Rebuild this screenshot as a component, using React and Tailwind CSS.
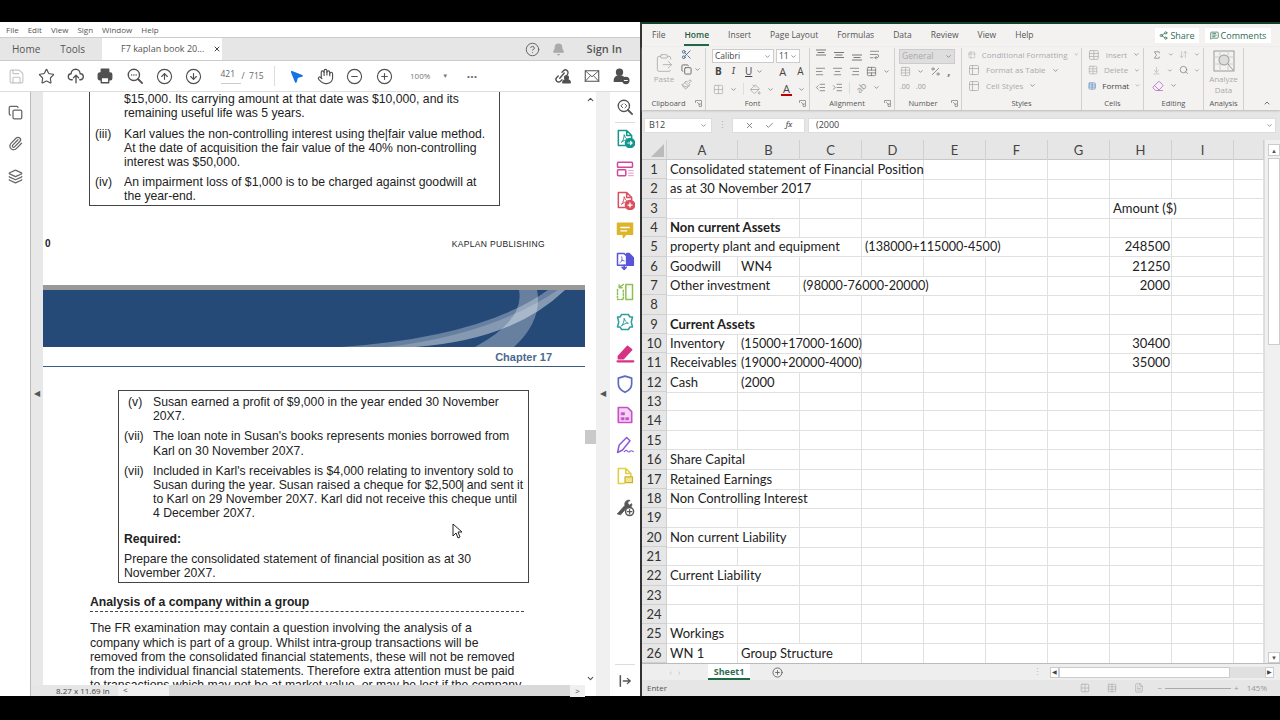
import React from "react";
import {
  Save, Star, Hand, MinusCircle, PlusCircle, HelpCircle, Bell, Copy, Paperclip, Layers,
  ArrowUpCircle, ArrowDownCircle, MousePointer2, ClipboardPaste, Scissors, Paintbrush, ChevronDown,
  Grid2x2, PaintBucket, AlignLeft, AlignCenter, AlignRight, WrapText, TableCellsMerge,
  IndentDecrease, IndentIncrease, Percent, Table, Sigma, ArrowDownUp, Eraser, ArrowDownToLine,
  Share2, MessageSquareText, ChevronUp, X, Check, Table2, FileText, Search,
} from "lucide-react";

const pdfFont = "font-['Liberation_Sans',Arial,sans-serif]";

// acrobat tool icons, lucide has nothing close to these
const Svg = ({ children, size = 20, color }) => (
  <svg width={size} height={size} viewBox="0 0 24 24" fill="none" stroke={color} strokeWidth="1.8" strokeLinejoin="round" strokeLinecap="round">
    {children}
  </svg>
);

const page = "M4 21V3h10l6 6v4M4 21h9M14 3v6h6";
const pdfMark = "M8 17c2-2 3-6 3-9 1 3 2 5 5 6-3 0-6 1-8 3z";

const railIcons = [
  <Svg color="#16968d" key="export"><path d={page} /><path d={pdfMark} strokeWidth="1.2" /><circle cx="18" cy="18" r="5.5" fill="#16968d" /><path d="M15.5 18h5M18.5 16l2 2-2 2" stroke="#fff" strokeWidth="1.4" /></Svg>,
  <Svg color="#d0479c" key="form"><rect x="3" y="4" width="18" height="6" rx="1" /><rect x="3" y="13" width="10" height="7" rx="1" /><path d="M16 14h6M16 17h6M16 20h6" strokeWidth="1.2" stroke="#e59ccb" /></Svg>,
  <Svg color="#d9505f" key="create"><path d={page} /><path d={pdfMark} strokeWidth="1.2" /><circle cx="18" cy="18" r="5.5" fill="#d9505f" /><path d="M18 15.5v5M15.5 18h5" stroke="#fff" strokeWidth="1.5" /></Svg>,
  <Svg color="#dcb52a" key="comment"><path d="M3 4h18v13h-8l-3 4v-4H3z" fill="#dcb52a" /><path d="M7 9h10M7 13h7" stroke="#fff" strokeWidth="1.6" /></Svg>,
  <Svg color="#5a55d6" key="combine"><path d="M3 3h8l3 3v11H3z" /><path d="M14 3h3l5 5v9h-8z" fill="#5a55d6" /><path d="M8 7c1 3 1 5-2 7M8 11l3 1" strokeWidth="1.1" /><path d="M11 17v5M8.5 19.5L11 22l2.5-2.5" strokeWidth="2" /></Svg>,
  <Svg color="#8cc152" key="organize"><rect x="13" y="3" width="8" height="18" /><path d="M3 9v12h7V9" strokeDasharray="2 2" /><path d="M10 3L5 6.5M5 3.5v3.5h3.5" /></Svg>,
  <Svg color="#2f9e9e" key="enhance"><path d="M8 3h8l2 3h3l-1.5 6L21 18h-3l-2 3H8l-2-3H3l1.5-6L3 6h3z" /><path d={pdfMark} strokeWidth="1.2" transform="translate(0 -0.5)" /></Svg>,
  <Svg color="#d63384" key="highlight"><path d="M4 16L15 4l5 4-10 11-6 0z" fill="#d63384" /><path d="M3 22h19" strokeWidth="2.6" /></Svg>,
  <Svg color="#5c6bc0" key="protect"><path d="M12 2.5l8 2.5v7c0 5-3.5 8-8 10-4.500-2-8-5-8-10V5z" strokeWidth="2" /></Svg>,
  <Svg color="#c94fc9" key="redact"><path d="M4 3h11l5 5v13H4z" fill="#f3d6f3" strokeWidth="2" /><rect x="7.500" y="9" width="4" height="3" fill="#c94fc9" strokeWidth="0.5" /><rect x="7.500" y="15" width="3.500" height="3" fill="#c94fc9" strokeWidth="0.5" /><rect x="13" y="15" width="3.500" height="3" fill="#c94fc9" strokeWidth="0.5" /></Svg>,
  <Svg color="#8a5bd6" key="sign"><path d="M3 21L5 12 14 3l4 4-9 11z" /><path d="M11 20c2-2 3-2 4-.5s2 1 3 0 2-1 4 .5" strokeWidth="1.4" /></Svg>,
  <Svg color="#e3cf4a" key="stamp"><path d="M4 21V3h9l6 6v3M4 21h7M13 3v6h6" strokeWidth="2" /><rect x="12" y="13" width="9" height="7" fill="#f2e58c" stroke="#c9b22e" strokeWidth="1.4" /></Svg>,
  <Svg color="#555" key="more"><path d="M3 20L12 10c-1-3 1-7 6-6l-3 3 2 3 3-2c1 4-3 6-6 5l-7 8z" fill="#555" strokeWidth="1" /><circle cx="17.500" cy="17.500" r="4.800" fill="#fff" strokeWidth="1.800" /><path d="M17.500 15v5M15 17.500h5" strokeWidth="1.500" /></Svg>,
];

const ToolBtn = ({ icon: Icon, className = "text-[#505050]" }) => (
  <div className="w-[29.5px] flex justify-center">
    <Icon size={17} className={className} strokeWidth={1.6} />
  </div>
);

const ToolSvg = ({ children }) => (
  <div className="w-[29.5px] flex justify-center">
    <Svg size={18} color="#505050">{children}</Svg>
  </div>
);

function PdfWindow() {
  return (
    <div className={`w-[640px] flex flex-col bg-white relative ${pdfFont}`}>
      <div className="h-[15px] flex items-center gap-[9px] pl-[6px] text-[8px] text-[#555] font-['Open_Sans',sans-serif] shrink-0">
        <span>File</span><span>Edit</span><span>View</span><span>Sign</span><span>Window</span><span>Help</span>
      </div>
      <div className="h-[24px] flex items-stretch bg-[#e6e6e6] border-t border-[#ccc] border-b font-['Open_Sans',sans-serif] shrink-0">
        <div className="w-[102px] flex items-center gap-[20px] pl-[12px] text-[10px] text-[#555]">
          <span>Home</span><span>Tools</span>
        </div>
        <div className="w-[120px] bg-white flex items-center pl-[19px] text-[9px] text-[#555] whitespace-nowrap">
          <span className="w-[92px]">F7 kaplan book 20...</span>
          <X size={8} strokeWidth={3} className="text-[#444]" />
        </div>
        <div className="flex-1 flex items-center justify-end pr-[18px] text-[11px] text-[#555] font-semibold">
          <HelpCircle size={15} className="text-[#666] mr-[12px]" strokeWidth={1.6} />
          <Bell size={13} fill="#aaa" className="text-[#aaa] mr-[22px]" />
          <span>Sign In</span>
        </div>
      </div>
      <div className="h-[31px] flex items-center pl-[2px] border-b border-[#ddd] shrink-0 font-['Open_Sans',sans-serif]">
        <ToolBtn icon={Save} className="text-[#c4c4c4]" />
        <ToolBtn icon={Star} />
        <ToolSvg><path d="M7 17H6a4 4 0 0 1-.5-8 6 6 0 0 1 12 0 4 4 0 0 1 .5 8h-1" /><path d="M12 21V11M8.500 14.500L12 11l3.500 3.500" /></ToolSvg>
        <ToolSvg><rect x="7" y="3" width="10" height="5" fill="#505050" /><rect x="3" y="8" width="18" height="9" rx="2" fill="#505050" /><rect x="7" y="14" width="10" height="7" fill="#fff" /></ToolSvg>
        <ToolSvg><circle cx="10.500" cy="10.500" r="7.500" /><path d="M16 16l5.500 5.500" strokeWidth="2.400" /><path d="M7.500 10.500h.01M10.500 10.500h.01M13.500 10.500h.01" strokeWidth="2" /></ToolSvg>
        <ToolBtn icon={ArrowUpCircle} />
        <ToolBtn icon={ArrowDownCircle} />
        <div className="w-[65px] flex items-center text-[8.5px] text-[#666] pl-[12px]">
          <span className="w-[20px] border-b border-[#ccc] pb-[2px]">421</span>
          <span className="ml-[1px] whitespace-nowrap">/ &nbsp;715</span>
        </div>
        <div className="w-px h-[20px] bg-[#ddd] mr-[9px]" />
        <MousePointer2 size={15} fill="#1473e6" className="text-[#1473e6] ml-[5px] mr-[7px]" />
        <ToolBtn icon={Hand} />
        <ToolBtn icon={MinusCircle} />
        <ToolBtn icon={PlusCircle} />
        <div className="w-[48px] flex items-center gap-[12px] pl-[11px] text-[8px] text-[#777]">
          <span>100%</span><span className="text-[6px]">▼</span>
        </div>
        <div className="w-[50px] text-center text-[#666] text-[12px] font-bold leading-none pb-[5px]">...</div>
        <div className="flex-1 flex justify-end pr-[4px]">
          <ToolSvg><path d="M9 15l6-7M7 12l-2 2a3.500 3.500 0 0 0 5 5l2-2M12 7l2-2a3.500 3.500 0 0 1 5 5" /><circle cx="18" cy="14" r="2.500" fill="#505050" /><path d="M13 21c0-3 2-4 5-4s5 1 5 4z" fill="#505050" /></ToolSvg>
          <ToolSvg><rect x="3" y="5" width="18" height="14" strokeWidth="1.400" /><path d="M3 5l9 8 9-8M3 19l7-7.500M21 19l-7-7.500" strokeWidth="1.200" /></ToolSvg>
          <ToolSvg><circle cx="10" cy="7" r="4" fill="#505050" /><path d="M3 19c0-5 3-7 7-7s5 1 6 2v5z" fill="#505050" /><circle cx="18.500" cy="18" r="4" fill="#505050" /><path d="M16.500 18h4" stroke="#fff" strokeWidth="1.400" /></ToolSvg>
        </div>
      </div>
      <div className="flex-1 min-h-0 flex">
        <div className="w-[31px] flex flex-col items-center pt-[13px] border-r border-[#bbb] shrink-0">
          <Copy size={15} className="text-[#666]" />
          <Paperclip size={15} className="text-[#666] mt-[16px]" />
          <Layers size={15} className="text-[#666] mt-[18px]" />
        </div>
        <div className="w-[12px] bg-[#e8e8e8] flex items-center justify-center text-[8px] text-[#555] shrink-0">◀</div>
        <div className="w-[542px] flex flex-col shrink-0 min-h-0">
          <PdfPage />
          <div className="h-[11px] -ml-[12px] w-[554px] shrink-0 bg-[#e6e6e6] flex items-center text-[8px] text-[#444] font-['Open_Sans',sans-serif]">
            <span className="ml-[25px] w-[62px]">8.27 x 11.69 in</span>
            <div className="w-[51px] h-full bg-[#f0f0f0] pl-[5px] leading-[10px]">&lt;</div>
            <div className="flex-1 h-full bg-[#d9d9d9]" />
            <span className="w-[15px] text-center bg-[#f0f0f0]">&gt;</span>
          </div>
        </div>
        <div className="w-[11px] bg-white flex flex-col items-center justify-between py-[3px] text-[9px] text-[#555] shrink-0 relative">
          <ChevronUp size={9} strokeWidth={3} />
          <div className="absolute top-[338px] left-0 w-full h-[14px] bg-[#c9c9c9]" />
          <ChevronDown size={9} strokeWidth={3} className="mb-[10px]" />
        </div>
        <div className="w-[14px] bg-[#f0f0f0] flex items-center justify-center text-[8px] text-[#555] shrink-0">◀</div>
        <div className="w-[30px] flex flex-col items-center bg-white shrink-0">
          <div className="h-[30px] flex items-center justify-center">
            <Svg color="#555" size={18}><circle cx="10.500" cy="10.500" r="7.500" /><path d="M16 16l5.500 5.500" strokeWidth="2.400" /><path d="M9 8l-2.500 2.500L9 13M12 8l2.500 2.500L12 13" strokeWidth="1.300" /></Svg>
          </div>
          <div className="w-[20px] h-px bg-[#ddd]" />
          {railIcons.map((icon) => (
            <div key={icon.key} className="h-[30.7px] flex items-center justify-center">{icon}</div>
          ))}
          <div className="flex-1" />
          <div className="w-[20px] h-px bg-[#ddd]" />
          <div className="h-[31px] flex items-center">
            <Svg color="#555" size={14}><path d="M4 3v18" strokeWidth="2.600" /><path d="M9 12h12M16 7.500l5 4.500-5 4.500" strokeWidth="2.200" /></Svg>
          </div>
        </div>
      </div>
      {/* mouse pointer over the page */}
      <svg width="11" height="16" viewBox="0 0 11 16" className="absolute left-[452px] top-[501px]">
        <path d="M1 1v12l3-3 2 5 2-1-2-5h4z" fill="#fff" stroke="#222" strokeWidth="1" strokeLinejoin="round" />
      </svg>
    </div>
  );
}

const Item = ({ mark, children, w = "w-[34px]" }) => (
  <div className="flex mb-[5.7px]">
    <div className={`shrink-0 ${w}`}>{mark}</div>
    <div>{children}</div>
  </div>
);

function PdfPage() {
  return (
    <div className="flex-1 min-h-0 overflow-hidden bg-white text-[12.22px] leading-[14.3px] text-[#222] whitespace-nowrap">
      <div className="ml-[46px] w-[411px] h-[114px] border-l border-b border-r border-[#444] pl-[5px]">
        <div className="pl-[29px] mb-[6px]">$15,000. Its carrying amount at that date was $10,000, and its<br />remaining useful life was 5 years.</div>
        <Item w="w-[29px]" mark="(iii)">Karl values the non-controlling interest using the|fair value method.<br />At the date of acquisition the fair value of the 40% non-controlling<br />interest was $50,000.</Item>
        <Item w="w-[29px]" mark="(iv)">An impairment loss of $1,000 is to be charged against goodwill at<br />the year-end.</Item>
      </div>
      <div className="flex justify-between items-center h-[14px] mt-[31px] pl-[2px] pr-[40px]">
        <span className="font-bold text-[10px]">0</span>
        <span className="text-[8.5px] tracking-[0.35px]">KAPLAN PUBLISHING</span>
      </div>
      <div className="h-[5px] mt-[34px] bg-[#999]" />
      <svg width="542" height="57" viewBox="0 0 542 57" className="block">
        <rect width="542" height="57" fill="#264a78" />
        <path d="M298 57 Q440 47 505 0 L522 0 Q470 50 372 57Z" fill="#fff" opacity=".3" />
        <path d="M345 57 Q450 44 515 0 L522 0 Q470 50 372 57Z" fill="#fff" opacity=".2" />
        <path d="M432 57 Q482 30 476 0 L494 0 Q500 30 471 57Z" fill="#fff" opacity=".3" />
      </svg>
      <div className="h-[20px] flex items-center justify-end pr-[33px] pt-[1px] text-[11px] font-bold text-[#4a6a8e] border-b border-[#3c5c80]">Chapter 17</div>
      <div className="ml-[75px] mt-[23px] w-[411px] h-[193px] border border-[#444] pl-[5px] pt-[4px]">
        <Item w="w-[29px]" mark={<span className="pl-[4px]">(v)</span>}>Susan earned a profit of $9,000 in the year ended 30 November<br />20X7.</Item>
        <Item w="w-[29px]" mark="(vii)">The loan note in Susan's books represents monies borrowed from<br />Karl on 30 November 20X7.</Item>
        <Item w="w-[29px]" mark="(vii)">Included in Karl's receivables is $4,000 relating to inventory sold to<br />Susan during the year. Susan raised a cheque for $2,500<span className="-mx-[1px]">|</span> and sent it<br />to Karl on 29 November 20X7. Karl did not receive this cheque until<br />4 December 20X7.</Item>
        <div className="font-bold mt-[11px] mb-[6px]">Required:</div>
        <div>Prepare the consolidated statement of financial position as at 30<br />November 20X7.</div>
      </div>
      <div className="ml-[47px] w-[434px] mt-[12px] font-bold border-b border-dashed border-[#444] pb-[2px]">Analysis of a company within a group</div>
      <div className="ml-[47px] mt-[9px]">
        The FR examination may contain a question involving the analysis of a<br />
        company which is part of a group. Whilst intra-group transactions will be<br />
        removed from the consolidated financial statements, these will not be removed<br />
        from the individual financial statements. Therefore extra attention must be paid<br />
        to transactions which may not be at market value, or may be lost if the company
      </div>
    </div>
  );
}

const Group = ({ w, label, launcher, children }) => (
  <div style={{ width: w }} className="h-full flex flex-col border-r border-[#d0d0d0] shrink-0 relative">
    <div className="flex-1 min-h-0 px-[3px] pt-[2px]">{children}</div>
    <div className={`h-[13px] text-center text-[7.5px] leading-[13px] text-[#555] ${launcher ? "pr-[10px]" : ""}`}>{label}</div>
    {launcher && (
      <svg width="7" height="7" viewBox="0 0 7 7" fill="none" stroke="#888" className="absolute right-[3px] bottom-[3px]">
        <path d="M.5 3V.5H6.500V6.500H4M2 2l3 3M5 3v2H3" strokeWidth=".8" />
      </svg>
    )}
  </div>
);

const G = ({ icon: Icon, c = "text-[#666]", s = 11 }) => <Icon size={s} className={c} strokeWidth={1.5} />;
const Row = ({ children, className = "" }) => <div className={`h-[15.5px] flex items-center whitespace-nowrap gap-[6px] ${className}`}>{children}</div>;
const Caret = () => <ChevronDown size={7} className="text-[#777]" strokeWidth={2.5} />;

// three short lines, top / middle / bottom vertical align
const VAlign = ({ y }) => (
  <svg width="12" height="12" viewBox="0 0 12 12" stroke="#777" strokeWidth="1">
    <path d={`M1 ${y}h10M2.500 ${y + 2.500}h7M1 ${y + 5}h10`} />
  </svg>
);

function Ribbon() {
  return (
    <div className="h-[63px] flex items-stretch bg-[#f3f2f1] shadow-[0_1px_2px_#bbb] relative text-[8px] text-[#666] shrink-0 pt-[1px]">
      <Group w={64} label="Clipboard" launcher>
        <div className="flex pl-[8px] gap-[6px]">
          <div className="flex flex-col items-center w-[22px] text-[#aaa]">
            <ClipboardPaste size={20} strokeWidth={1} className="text-[#aaa] mt-[3px]" />
            <span className="text-[8px]">Paste</span>
          </div>
          <div className="flex flex-col gap-[4px] -mt-[1px]">
            <Scissors size={11} className="text-[#4a6a8e]" />
            <div className="flex items-center gap-[2px]"><Copy size={11} className="text-[#666]" /><Caret /></div>
            <Paintbrush size={11} className="text-[#aaa]" />
          </div>
        </div>
      </Group>
      <Group w={104} label="Font" launcher>
        <div className="flex gap-[2px] pl-[3px] -mt-[1px]">
          <div className="w-[62px] h-[14px] bg-white border border-[#ccc] flex items-center justify-between px-[2px] text-[8.5px] text-[#444]">Calibri<Caret /></div>
          <div className="w-[24px] h-[14px] bg-white border border-[#ccc] flex items-center justify-between px-[2px] text-[8.5px] text-[#444]">11<Caret /></div>
        </div>
        <Row className="pl-[6px] mt-[1px] gap-[10px] text-[10px] text-[#444]">
          <b>B</b><i className="font-serif">I</i><span className="underline -mr-[6px]">U</span><Caret />
          <span className="ml-[6px] text-[11px]">A</span><span className="text-[10px] ml-[1px]">A</span>
        </Row>
        <Row className="pl-[4px] mt-[2px]">
          <G icon={Grid2x2} c="text-[#aaa]" /><Caret />
          <span className="w-px h-[12px] bg-[#ddd]" />
          <G icon={PaintBucket} c="text-[#999]" /><Caret />
          <span className="ml-[1px] text-[11px] text-[#444] border-b-2 border-[#c00000] leading-[11px] px-[2px]">A</span><Caret />
        </Row>
      </Group>
      <Group w={85} label="Alignment" launcher>
        <div className="-mt-[3px]">
          <Row className="pl-[2px]"><VAlign y={1} /><VAlign y={3.500} /><VAlign y={6} /><G icon={WrapText} /></Row>
          <Row className="pl-[2px] mt-[1px]"><G icon={AlignLeft} /><G icon={AlignCenter} /><G icon={AlignRight} /><G icon={TableCellsMerge} /><Caret /></Row>
          <Row className="pl-[2px] mt-[1px]"><G icon={IndentDecrease} /><G icon={IndentIncrease} /><span className="w-px h-[12px] bg-[#ddd]" /><span className="text-[9px] text-[#999] -rotate-45">ab</span><Caret /></Row>
        </div>
      </Group>
      <Group w={67} label="Number" launcher>
        <div className="-mt-[1px] w-[56px] h-[15px] bg-[#dedede] border border-[#ccc] text-[8.5px] text-[#aaa] flex items-center justify-between px-[2px] ml-[1px]">General<Caret /></div>
        <Row className="pl-[2px]"><G icon={Table} c="text-[#aaa]" /><Caret /><Percent size={11} className="text-[#888]" /><span className="font-bold text-[13px] leading-none text-[#888] -mt-[3px]">,</span></Row>
        <Row className="pl-[2px] text-[7px] text-[#999]"><span>.00</span><span>.00</span></Row>
      </Group>
      <Group w={120} label="Styles">
        <div className="pl-[3px] text-[#aaa] flex flex-col -mt-[3px]">
          <Row className="gap-[2px]"><G icon={Table2} c="text-[#aaa]" s={12} />Conditional Formatting<Caret /></Row>
          <Row className="gap-[2px]"><G icon={Table2} c="text-[#aaa]" s={12} />Format as Table<Caret /></Row>
          <Row className="gap-[2px]"><G icon={Table2} c="text-[#aaa]" s={12} />Cell Styles<Caret /></Row>
        </div>
      </Group>
      <Group w={62} label="Cells">
        <div className="pl-[3px] text-[#aaa] flex flex-col -mt-[3px]">
          <Row className="gap-[2px]"><G icon={Table} c="text-[#aaa]" s={12} />Insert<Caret /></Row>
          <Row className="gap-[2px]"><G icon={Table} c="text-[#aaa]" s={12} />Delete<Caret /></Row>
          <Row className="gap-[2px] text-[#444]"><G icon={Table} c="text-[#2b6cb0]" s={12} />Format<Caret /></Row>
        </div>
      </Group>
      <Group w={60} label="Editing">
        <div className="-mt-[3px]">
          <Row className="pl-[5px] gap-[3px]"><G icon={Sigma} s={12} /><Caret /><G icon={ArrowDownUp} c="text-[#aaa]" /><Caret /></Row>
          <Row className="pl-[5px] gap-[3px]"><G icon={ArrowDownToLine} c="text-[#aaa]" /><Caret /><G icon={Search} s={12} /><Caret /></Row>
          <Row className="pl-[5px] gap-[3px]"><G icon={Eraser} c="text-[#b15fc5]" s={12} /><Caret /></Row>
        </div>
      </Group>
      <Group w={40} label="Analysis">
        <div className="flex flex-col items-center text-[#aaa] text-[8px] leading-[11px]">
          <svg width="22" height="22" viewBox="0 0 22 22" fill="none" stroke="#999" strokeWidth="1" className="mb-[1px]">
            <rect x="1" y="1" width="20" height="20" />
            <path d="M1 7h20M1 14h20M7 1v20M15 1v20" stroke="#ccc" />
            <circle cx="11" cy="10" r="5" fill="#ddd" />
            <path d="M15 14l5 6" />
          </svg>
          <span>Analyze</span><span>Data</span>
        </div>
      </Group>
      <ChevronUp size={8} strokeWidth={2.5} className="absolute right-[9px] bottom-[3px] text-[#555]" />
    </div>
  );
}

const widths = "grid-cols-[71px_62px_62px_62px_62px_62px_62px_62px_62px_30px]";
const right = "text-right pr-[1px]";
// column index: [text, classes, columns taken]
const rows = [
  { 0: ["Consolidated statement of Financial Position", "col-span-4", 4] },
  { 0: ["as at 30 November 2017", "col-span-3", 3] },
  { 7: ["Amount ($)", "col-span-2", 2] },
  { 0: ["Non current Assets", "col-span-2 font-bold", 2] },
  { 0: ["property plant and equipment", "col-span-3", 3], 3: ["(138000+115000-4500)", "col-span-3 text-[12.6px]", 3], 7: ["248500", right, 1] },
  { 0: ["Goodwill", "", 1], 1: ["WN4", "", 1], 7: ["21250", right, 1] },
  { 0: ["Other investment", "col-span-2", 2], 2: ["(98000-76000-20000)", "col-span-3 text-[12.6px]", 3], 7: ["2000", right, 1] },
  {},
  { 0: ["Current Assets", "col-span-2 font-bold", 2] },
  { 0: ["Inventory", "", 1], 1: ["(15000+17000-1600)", "col-span-2 text-[12.6px]", 2], 7: ["30400", right, 1] },
  { 0: ["Receivables", "", 1], 1: ["(19000+20000-4000)", "col-span-2 text-[12.6px]", 2], 7: ["35000", right, 1] },
  { 0: ["Cash", "", 1], 1: ["(2000", "", 1] },
  {}, {}, {},
  { 0: ["Share Capital", "col-span-2", 2] },
  { 0: ["Retained Earnings", "col-span-2", 2] },
  { 0: ["Non Controlling Interest", "col-span-2", 2] },
  {},
  { 0: ["Non current Liability", "col-span-2", 2] },
  {},
  { 0: ["Current Liability", "col-span-2", 2] },
  {}, {},
  { 0: ["Workings", "", 1] },
  { 0: ["WN 1", "", 1], 1: ["Group Structure", "col-span-2", 2] },
];

function rowCells(row) {
  const cells = [];
  for (let c = 0; c < 10; ) {
    const cell = row[c];
    if (cell) {
      cells.push(<div key={c} className={`border-r border-b border-[#e0e0e0] pl-[3px] whitespace-nowrap ${cell[1]}`}>{cell[0]}</div>);
      c += cell[2];
    } else {
      cells.push(<div key={c} className="border-r border-b border-[#e0e0e0]" />);
      c += 1;
    }
  }
  return cells;
}

function Sheet() {
  return (
    <div className="flex-1 min-h-0 flex overflow-hidden bg-white font-['Lato',sans-serif]">
      <div className="w-[622px] shrink-0 flex flex-col">
        <div className="h-[20px] flex shrink-0 bg-[#e6e6e6] border-b border-[#c8c8c8] text-[13px] text-[#444]">
          <div className="w-[25px] shrink-0 border-r border-[#d0d0d0] relative">
            <div className="absolute right-[2px] bottom-[2px] w-0 h-0 border-l-[13px] border-l-transparent border-b-[13px] border-b-[#bbb]" />
          </div>
          <div className={`grid flex-1 ${widths}`}>
            {["A", "B", "C", "D", "E", "F", "G", "H", "I", ""].map((h, i) => (
              <div key={i} className="border-r border-[#d0d0d0] text-center leading-[20px]">{h}</div>
            ))}
          </div>
        </div>
        {rows.map((row, i) => (
          <div key={i} className="h-[19.35px] flex shrink-0 text-[13px] leading-[19px] text-[#222]">
            <div className="w-[25px] shrink-0 bg-[#e6e6e6] border-r border-b border-[#d0d0d0] text-center text-[#333]">{i + 1}</div>
            <div className={`grid flex-1 ${widths}`}>{rowCells(row)}</div>
          </div>
        ))}
      </div>
      <div className="w-[16px] bg-[#f0f0f0] flex flex-col items-end text-[#555] border-l border-[#ddd]">
        <div className="w-[12px] h-[12px] mt-[4px] bg-white border border-[#ccc] flex items-center justify-center text-[6px]">▲</div>
        <div className="w-[12px] h-[187px] mt-[2px] bg-white border border-[#ccc]" />
        <div className="flex-1" />
        <div className="w-[12px] h-[11px] bg-white border border-[#ccc] flex items-center justify-center text-[6px]">▼</div>
      </div>
    </div>
  );
}

function ExcelWindow() {
  return (
    <div className="w-[638px] flex flex-col bg-[#e6e6e6] font-['Open_Sans',sans-serif]">
      <div className="h-[2px] bg-[#14412b] shrink-0" />
      <div className="h-[23px] bg-[#f3f2f1] flex items-center pl-[10px] text-[8.5px] text-[#555] shrink-0">
        <div className="flex gap-[19px]">
          <span>File</span>
          <span className="relative text-[#1d5a3c] font-semibold">Home<span className="absolute -bottom-[4px] left-0 right-0 h-[2px] bg-[#1d6b45]" /></span>
          <span>Insert</span><span>Page Layout</span><span>Formulas</span><span>Data</span><span>Review</span><span>View</span><span>Help</span>
        </div>
        <div className="ml-auto flex gap-[6px] pr-[9px] text-[9px] text-[#2d6e4f]">
          <div className="w-[44px] h-[15px] bg-white flex items-center justify-center gap-[2px]"><Share2 size={9} />Share</div>
          <div className="w-[66px] h-[15px] bg-white flex items-center justify-center gap-[2px]"><MessageSquareText size={9} />Comments</div>
        </div>
      </div>
      <Ribbon />
      <div className="h-[30px] flex items-center gap-[3px] pl-[2px] pr-[4px] text-[9px] text-[#444] shrink-0">
        <div className="w-[68px] h-[15px] bg-white flex items-center justify-between px-[4px] border border-[#ddd]">B12<Caret /></div>
        <span className="w-[14px] text-center text-[#aaa]">⋮</span>
        <div className="w-[73px] h-[15px] bg-white flex items-center justify-around px-[6px] border border-[#ddd]">
          <X size={9} className="text-[#666]" /><Check size={9} className="text-[#666]" /><i className="font-serif text-[9px]">fx</i>
        </div>
        <div className="flex-1 h-[15px] bg-white flex items-center justify-between pl-[7px] pr-[2px] border border-[#ddd]">(2000<Caret /></div>
      </div>
      <Sheet />
      <div className="h-[17px] flex items-center bg-[#eee] border-t border-[#bbb] text-[9px] shrink-0 relative z-10">
        <span className="w-[66px] text-center text-[#bbb] text-[8px]">‹ &nbsp; ›</span>
        <div className="w-[42px] h-full bg-white border-b-2 border-[#1d6b45] text-center font-bold text-[#2d6e4f] leading-[15px]">Sheet1</div>
        <PlusCircle size={11} className="ml-[22px] text-[#666]" />
        <span className="ml-[250px] text-[#bbb]">⋮</span>
        <div className="ml-[8px] w-[224px] h-[11px] flex bg-[#e0e0e0] text-[6px] text-[#444]">
          <div className="w-[9px] bg-white border border-[#ccc] leading-[9px] text-center">◀</div>
          <div className="w-[171px] bg-white border border-[#ccc]" />
          <div className="flex-1" />
          <div className="w-[9px] bg-white border border-[#ccc] leading-[9px] text-center">▶</div>
        </div>
      </div>
      <div className="h-[16px] flex items-center bg-[#e6e6e6] pl-[5px] text-[8px] text-[#555] shrink-0">
        <span>Enter</span>
        <div className="ml-auto flex items-center pr-[13px] text-[#999]">
          <Grid2x2 size={10} className="mr-[17px]" strokeWidth={1.2} />
          <Table size={10} className="mr-[17px]" strokeWidth={1.2} />
          <FileText size={10} className="mr-[14px]" strokeWidth={1.2} />
          <span>−</span>
          <div className="w-[66px] h-px bg-[#aaa] mx-[3px]" />
          <span>+</span>
          <span className="ml-[8px]">145%</span>
        </div>
      </div>
    </div>
  );
}

export default function App() {
  return (
    <div className="w-[1280px] h-[720px] bg-black flex flex-col overflow-hidden">
      <div className="h-[22px] shrink-0" />
      <div className="flex-1 min-h-0 flex">
        <PdfWindow />
        <div className="w-[2px] bg-[#333]" />
        <ExcelWindow />
      </div>
      <div className="h-[24px] shrink-0" />
    </div>
  );
}
